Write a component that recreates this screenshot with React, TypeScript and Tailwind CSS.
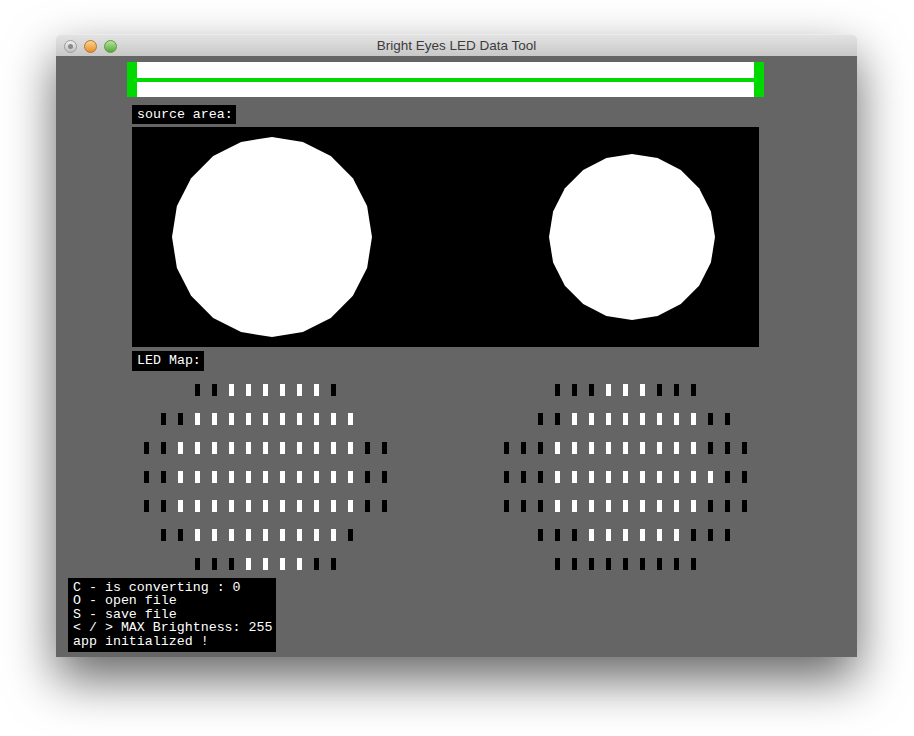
import React from 'react';

type Led = ' ' | 'b' | 'w';

const leftEye: string[] = [
  '   bbwwwwwwb   ',
  ' bbwwwwwwwwww  ',
  'bbwwwwwwwwwwwbb',
  'bbwwwwwwwwwwwbb',
  'bbwwwwwwwwwwwbb',
  ' bbwwwwwwwwwb  ',
  '   bbbwwwwbb   ',
];

const rightEye: string[] = [
  '   bbbwwwbbb   ',
  '  bbwwwwwwwwbb ',
  'bbbwwwwwwwwwbbb',
  'bbbwwwwwwwwwwbb',
  'bbbwwwwwwwwwbbb',
  '  bbbwwwwwwbbb ',
  '   bbbbbbbbb   ',
];

const mono = { fontFamily: '"Liberation Mono", "DejaVu Sans Mono", monospace' };

function polygon(cx: number, cy: number, r: number, sides = 20) {
  const pts: string[] = [];
  for (let i = 0; i < sides; i++) {
    const a = -Math.PI / 2 + (i * 2 * Math.PI) / sides;
    pts.push(`${(cx + r * Math.cos(a)).toFixed(1)},${(cy + r * Math.sin(a)).toFixed(1)}`);
  }
  return pts.join(' ');
}

function LedGrid({ rows }: { rows: string[] }) {
  return (
    <div className="flex flex-col gap-[17px]">
      {rows.map((row, r) => (
        <div key={r} className="flex h-[12px]">
          {row.split('').map((c, i) => (
            <div key={i} className="w-[17px] h-[12px]">
              {(c as Led) !== ' ' && (
                <div className={['w-[5px] h-[12px]', c === 'w' ? 'bg-white' : 'bg-black'].join(' ')} />
              )}
            </div>
          ))}
        </div>
      ))}
    </div>
  );
}

function Label({ text, width, height }: { text: string; width: string; height: string }) {
  return (
    <div
      className={['bg-black text-white text-[13.3px] pl-[5px] whitespace-pre', width, height].join(' ')}
      style={mono}
    >
      {text}
    </div>
  );
}

export default function App() {
  return (
    <div className="w-[914px] h-[736px] bg-white pt-[34px] pl-[56px] overflow-hidden">
      <div className="w-[801px] h-[623px] flex flex-col rounded-t-[5px] shadow-[0_22px_50px_rgba(0,0,0,0.6)]">
        {/* title bar */}
        <div className="relative h-[22px] rounded-t-[5px] border-t border-[#ececec] bg-gradient-to-b from-[#e3e3e3] to-[#c8c8c8] flex items-center justify-center">
          <div className="absolute left-[8px] top-[5px] flex gap-[7px]">
            <div className="w-[13px] h-[13px] rounded-full border border-[#9c9c9c] bg-gradient-to-b from-[#f0f0f0] to-[#c0c0c0] flex items-center justify-center">
              <div className="w-[5px] h-[5px] rounded-full bg-[#8a8a8a]" />
            </div>
            <div className="w-[13px] h-[13px] rounded-full border border-[#b9742a] bg-gradient-to-b from-[#fbd38c] to-[#e58f22]" />
            <div className="w-[13px] h-[13px] rounded-full border border-[#5c9a3f] bg-gradient-to-b from-[#b6e59a] to-[#55a83a]" />
          </div>
          <span
            className="text-[13.5px] text-[#3c3c3c] leading-none pt-[1px]"
            style={{ fontFamily: '"Liberation Sans", Arial, sans-serif' }}
          >
            Bright Eyes LED Data Tool
          </span>
        </div>

        {/* content */}
        <div className="flex-1 bg-[#656565] flex flex-col">
          <div className="ml-[71px] mt-[6px] w-[637px] h-[35px] flex bg-white">
            <div className="w-[10px] bg-[#00d900]" />
            <div className="flex-1 flex items-center">
              <div className="w-full h-[4px] bg-[#00d900]" />
            </div>
            <div className="w-[10px] bg-[#00d900]" />
          </div>

          <div className="ml-[76px] mt-[8px]">
            <Label text="source area:" width="w-[104px]" height="h-[19px] leading-[19px]" />
          </div>

          <div className="ml-[76px] mt-[3px] w-[627px] h-[220px] bg-black">
            <svg width="627" height="220" viewBox="0 0 627 220">
              <polygon points={polygon(140, 110, 100)} fill="#fff" />
              <polygon points={polygon(500, 110, 83)} fill="#fff" />
            </svg>
          </div>

          <div className="ml-[76px] mt-[4px]">
            <Label text="LED Map:" width="w-[72px]" height="h-[20px] leading-[20px]" />
          </div>

          <div className="mt-[13px] ml-[88px] flex gap-[105px]">
            <LedGrid rows={leftEye} />
            <LedGrid rows={rightEye} />
          </div>

          <div
            className="ml-[12px] mt-[8px] w-[208px] h-[74px] bg-black text-white text-[13.3px] leading-[13.4px] pl-[5px] pt-[3px] whitespace-pre"
            style={mono}
          >
            <div>C - is converting : 0</div>
            <div>O - open file</div>
            <div>S - save file</div>
            <div>{'< / > MAX Brightness: 255'}</div>
            <div>app initialized !</div>
          </div>
        </div>
      </div>
    </div>
  );
}
